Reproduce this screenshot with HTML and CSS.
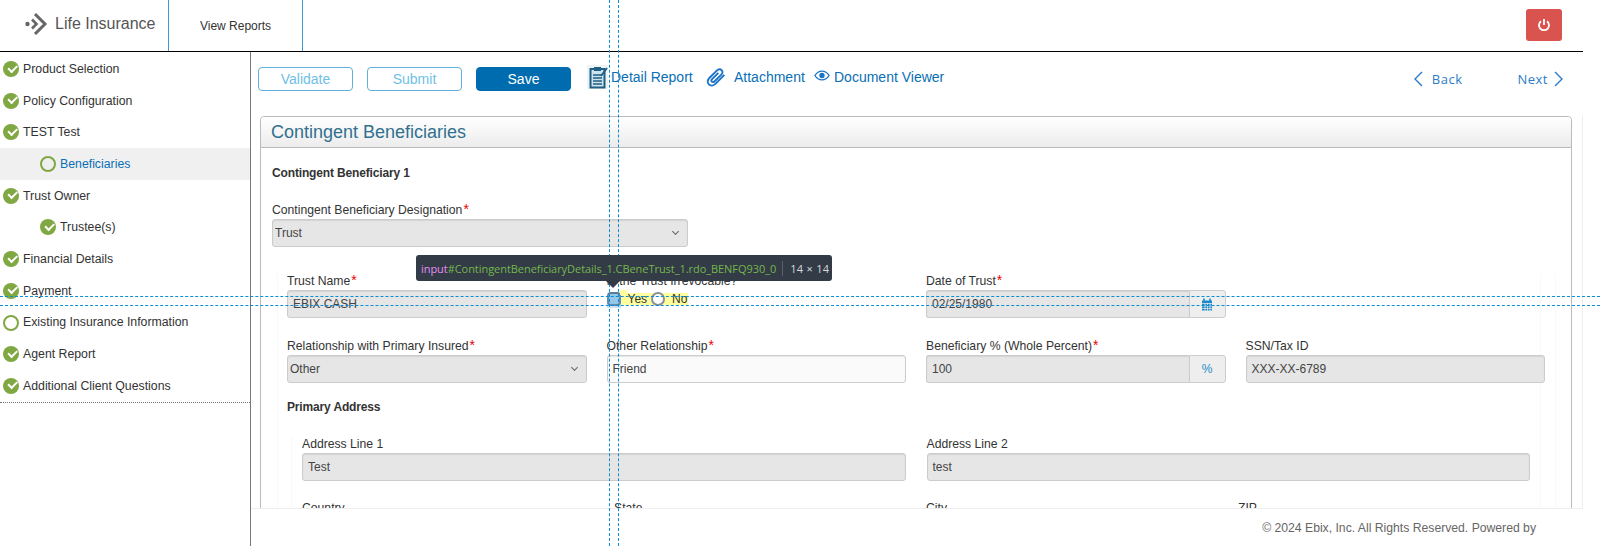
FILE: index.html
```html
<!DOCTYPE html>
<html lang="en">
<head>
<meta charset="UTF-8" />
<meta name="viewport" content="width=device-width, initial-scale=1" />
<title>Life Insurance</title>
<link rel="stylesheet" href="styles.css">
</head>
<body>
  <header class="topbar">
    <div class="brand">
      <svg class="brand-mark" viewBox="0 0 23 24" width="23" height="24"><circle cx="2.500" cy="12" r="2.200" fill="#666"/><path d="M7 7.500 11.500 12 7 16.500" fill="none" stroke="#666" stroke-width="2.600"/><path d="M10 2 20 12 10 22" fill="none" stroke="#666" stroke-width="3"/></svg>
      <span>Life Insurance</span>
    </div>
    <a class="top-tab">View Reports</a>
    <button class="power">
      <svg viewBox="0 0 14 14" width="14" height="14"><path d="M4 3.200a5 5 0 1 0 6 0" fill="none" stroke="#fff" stroke-width="1.800"/><path d="M7 1v6" stroke="#fff" stroke-width="1.800"/></svg>
    </button>
  </header>

  <div class="shell">
    <nav class="sidenav">
      <div class="step done">Product Selection</div>
      <div class="step done">Policy Configuration</div>
      <div class="step done">TEST Test</div>
      <div class="step open sub current">Beneficiaries</div>
      <div class="step done">Trust Owner</div>
      <div class="step done sub">Trustee(s)</div>
      <div class="step done">Financial Details</div>
      <div class="step done">Payment</div>
      <div class="step open">Existing Insurance Information</div>
      <div class="step done">Agent Report</div>
      <div class="step done">Additional Client Questions</div>
    </nav>

    <main class="main">
      <div class="toolbar">
        <button class="btn btn-ghost">Validate</button>
        <button class="btn btn-ghost">Submit</button>
        <button class="btn btn-save">Save</button>
        <a class="tool tool-report">
          <svg viewBox="0 0 21 24" width="21" height="24"><rect width="21" height="24" fill="#eef4f5"/><rect x="3.500" y="4" width="14" height="18.500" fill="#cfe3ee" stroke="#1f5f85" stroke-width="2"/><rect x="7" y="2" width="7" height="4" fill="#1f5f85"/><path d="M6 10h9M6 13h9M6 16h9M6 19h9" stroke="#1f5f85" stroke-width="1.300"/><path d="M14 11 20 3" stroke="#1f5f85" stroke-width="1.800"/></svg>
          Detail Report
        </a>
        <a class="tool tool-attach">
          <svg viewBox="0 0 20 20" width="21" height="21"><path d="M17.500 7.500 9 16c-2 2-4.800 2-6.300.500-1.500-1.500-1.500-4 .500-6L10.500 3.200c1.400-1.400 3.300-1.400 4.400-.300 1.100 1.100 1.100 3-.300 4.300L8 13.800c-.8.8-1.800.8-2.400.200-.6-.6-.6-1.600.200-2.400l6-6" fill="none" stroke="#1a73c8" stroke-width="1.800"/></svg>
          Attachment
        </a>
        <a class="tool tool-viewer">
          <svg viewBox="0 0 18 12" width="16" height="11"><path d="M1 6c2-3.200 4.800-5 8-5s6 1.800 8 5c-2 3.200-4.800 5-8 5S3 9.200 1 6z" fill="none" stroke="#1a73c8" stroke-width="1.500"/><circle cx="9" cy="6" r="3" fill="#1a73c8"/></svg>
          Document Viewer
        </a>
        <div class="pager">
          <a class="pager-link"><svg viewBox="0 0 10 16" width="10" height="16"><path d="M9 1 2 8l7 7" fill="none" stroke="#2a7cc7" stroke-width="1.400"/></svg>Back</a>
          <a class="pager-link pager-next">Next<svg viewBox="0 0 10 16" width="10" height="16"><path d="M1 1l7 7-7 7" fill="none" stroke="#2a7cc7" stroke-width="1.400"/></svg></a>
        </div>
      </div>

      <div class="scroll-area">
        <section class="panel">
          <h2 class="panel-title">Contingent Beneficiaries</h2>
          <div class="panel-body">
            <h3 class="sub-title">Contingent Beneficiary 1</h3>
            <div class="field field-designation">
              <label>Contingent Beneficiary Designation<i>*</i></label>
              <div class="input select">Trust</div>
            </div>

            <div class="trust-box">
              <div class="grid-4">
                <div class="field">
                  <label>Trust Name<i>*</i></label>
                  <div class="input">EBIX CASH</div>
                </div>
                <div class="field">
                  <label>Is the Trust Irrevocable?</label>
                  <div class="radios">
                    <span class="radio radio-picked"></span><span class="radio-text">Yes</span>
                    <span class="radio"></span><span class="radio-text">No</span>
                  </div>
                </div>
                <div class="field">
                  <label>Date of Trust<i>*</i></label>
                  <div class="input-group">
                    <div class="input">02/25/1980</div>
                    <span class="addon">
                      <svg viewBox="0 0 12 13" width="12" height="13"><path d="M1 2.500h10V12.500H1z" fill="#1e8ac9"/><path d="M3 .500v3M9 .500v3" stroke="#1e8ac9" stroke-width="1.600"/><path d="M1 5.500h10M1 8h10M1 10.500h10M4 5v8M6.500 5v8M9 5v8" stroke="#eee" stroke-width=".7"/></svg>
                    </span>
                  </div>
                </div>
                <div></div>

                <div class="field">
                  <label>Relationship with Primary Insured<i>*</i></label>
                  <div class="input select">Other</div>
                </div>
                <div class="field">
                  <label>Other Relationship<i>*</i></label>
                  <div class="input input-live">Friend</div>
                </div>
                <div class="field">
                  <label>Beneficiary % (Whole Percent)<i>*</i></label>
                  <div class="input-group">
                    <div class="input">100</div>
                    <span class="addon addon-text">%</span>
                  </div>
                </div>
                <div class="field">
                  <label>SSN/Tax ID</label>
                  <div class="input">XXX-XX-6789</div>
                </div>
              </div>

              <h3 class="sub-title address-title">Primary Address</h3>
              <div class="address-box">
                <div class="grid-2">
                  <div class="field">
                    <label>Address Line 1</label>
                    <div class="input">Test</div>
                  </div>
                  <div class="field">
                    <label>Address Line 2</label>
                    <div class="input">test</div>
                  </div>
                </div>
                <div class="grid-addr">
                  <label>Country</label>
                  <label>State</label>
                  <label>City</label>
                  <label>ZIP</label>
                </div>
              </div>
            </div>
          </div>
        </section>
      </div>

      <footer class="footer">© 2024 Ebix, Inc. All Rights Reserved. Powered by</footer>
    </main>
  </div>

  <!-- devtools inspect overlay -->
  <div class="inspect-hit"></div>
  <div class="guide guide-v guide-v1"></div>
  <div class="guide guide-v guide-v2"></div>
  <div class="guide guide-h guide-h1"></div>
  <div class="guide guide-h guide-h2"></div>
  <div class="inspect-tip">
    <span class="tip-tag">input</span><span class="tip-id">#ContingentBeneficiaryDetails_1.CBeneTrust_1.rdo_BENFQ930_0</span><span class="tip-size">14 × 14</span>
  </div>
</body>
</html>
```

FILE: styles.css
```css
html, body {
  margin: 0;
  height: 100%;
}
body {
  position: relative;
  height: 546px;
  overflow: hidden;
  background: #fff;
  color: #333;
  font-family: "Liberation Sans", Arial, sans-serif;
  font-size: 12px;
  display: flex;
  flex-direction: column;
}

/* top bar */
.topbar {
  height: 51px;
  width: 1583px;
  flex: none;
  display: flex;
  align-items: stretch;
  border-bottom: 1px solid #000;
}
.brand {
  width: 168px;
  box-sizing: border-box;
  padding: 0 0 4px 25px;
  display: flex;
  align-items: center;
  gap: 7px;
  font-size: 16px;
  color: #555;
}
.top-tab {
  width: 135px;
  display: flex;
  align-items: center;
  justify-content: center;
  border-left: 1px solid #3a9ad9;
  border-right: 1px solid #3a9ad9;
  font-size: 12px;
  box-sizing: border-box;
  color: #333;
}
.power {
  margin: 9px 21px 0 auto;
  width: 36px;
  height: 32px;
  border: none;
  border-radius: 3px;
  background: #d9534f;
  padding: 0;
  display: flex;
  align-items: center;
  justify-content: center;
}

.shell {
  flex: 1;
  display: flex;
  min-height: 0;
}

/* side steps */
.sidenav {
  width: 250px;
  height: 351px;
  flex: none;
  border-bottom: 1px dotted #777;
  padding-top: 1px;
  box-sizing: border-box;
  font-size: 12.300px;
}
.step {
  height: 31.7px;
  display: flex;
  align-items: center;
  padding-left: 23px;
  position: relative;
  color: #333;
}
.step::before {
  content: "";
  position: absolute;
  left: 3px;
  top: 8px;
  width: 16px;
  height: 16px;
  border-radius: 50%;
  box-sizing: border-box;
}
.step.done::before {
  background: #7fa843;
}
.step.done::after {
  content: "";
  position: absolute;
  left: 7.500px;
  top: 11.500px;
  width: 7px;
  height: 3.500px;
  border-left: 2px solid #fff;
  border-bottom: 2px solid #fff;
  transform: rotate(-45deg);
}
.step.open::before {
  background: #fff;
  border: 2px solid #7fa843;
}
.step.sub {
  padding-left: 60px;
}
.step.sub::before {
  left: 40px;
}
.step.sub.done::after {
  left: 44.500px;
}
.step.current {
  background: #f0f0f0;
  color: #0a6fb5;
}
.step.current::before {
  background: transparent;
}

/* main column */
.main {
  flex: 1;
  min-width: 0;
  display: flex;
  flex-direction: column;
  border-left: 1px solid #777;
}
.toolbar {
  height: 64px;
  flex: none;
  box-sizing: border-box;
  padding: 15px 36px 0 7px;
  display: flex;
  align-items: flex-start;
}
.btn {
  width: 95px;
  height: 24px;
  border-radius: 4px;
  font-family: inherit;
  font-size: 14px;
  padding: 0;
  margin-right: 14px;
}
.btn-ghost {
  background: #fff;
  border: 1px solid #5fb0dc;
  color: #6fc0e6;
}
.btn-save {
  background: #006cb0;
  border: 1px solid #006cb0;
  color: #fff;
  margin-right: 16px;
}
.tool {
  display: flex;
  align-items: center;
  font-size: 14px;
  color: #0a6fb5;
  height: 20px;
  white-space: nowrap;
}
.tool svg {
  flex: none;
}
.tool-report {
  width: 108px;
  gap: 3px;
  margin-right: 11px;
}
.tool-attach {
  gap: 7px;
  width: 96px;
  margin-right: 12px;
}
.tool-viewer {
  gap: 4px;
}
.tool-viewer svg {
  margin-bottom: 4px;
}
.pager {
  margin-left: auto;
  display: flex;
  gap: 55px;
  padding-top: 3px;
}
.pager-link {
  display: flex;
  align-items: center;
  gap: 9px;
  font-family: "Open Sans", sans-serif;
  font-size: 13px;
  letter-spacing: .5px;
  color: #2a7cc7;
}
.pager-next {
  gap: 6px;
}

/* scrolled form */
.scroll-area {
  flex: 1;
  min-height: 0;
  overflow: hidden;
  width: 1332px;
  box-sizing: border-box;
  padding-left: 9px;
  border-bottom: 1px solid #eee;
  border-right: 1px solid #eee;
}
.panel {
  width: 1312px;
  border: 1px solid #bbb;
  border-radius: 4px 4px 0 0;
  box-sizing: border-box;
  height: 500px;
}
.panel-title {
  margin: 0;
  height: 30px;
  padding: 0 0 0 10px;
  font-weight: normal;
  font-size: 18px;
  line-height: 30px;
  color: #31708f;
  border-bottom: 1px solid #bbb;
  background: linear-gradient(#fff, #ececec);
  border-radius: 4px 4px 0 0;
}
.panel-body {
  padding: 18px 0 0 11px;
}
.sub-title {
  margin: 0;
  font-size: 12px;
  line-height: 14px;
  font-weight: bold;
  letter-spacing: -.15px;
  color: #333;
}
.field label, .grid-addr label {
  display: block;
  font-size: 12.200px;
  line-height: 14px;
  margin-bottom: 2px;
  white-space: nowrap;
}
.field label i {
  color: #e00;
  font-style: normal;
  font-size: 14px;
  line-height: 10px;
  margin-left: 1px;
}
.field-designation {
  width: 416px;
  margin-top: 23px;
}
.input {
  height: 28px;
  box-sizing: border-box;
  border: 1px solid #ccc;
  border-radius: 3px;
  background: #e6e6e6;
  padding: 0 5px;
  line-height: 26px;
  color: #444;
  white-space: nowrap;
}
.field .input {
  box-shadow: inset 0 1px 1px rgba(0,0,0,.08);
}
.input-live {
  background: #fafafa;
}
.select {
  position: relative;
  padding-left: 2px;
}
.select::after {
  content: "";
  position: absolute;
  right: 9px;
  top: 9px;
  width: 4px;
  height: 4px;
  border-right: 1px solid #666;
  border-bottom: 1px solid #666;
  transform: rotate(45deg);
}
.trust-box {
  margin: 27px 0 0 5px;
  padding-left: 9px;
  width: 1264px;
  border-left: 1px solid #f9f9f9;
  border-right: 1px solid #f9f9f9;
  box-shadow: 14px 0 0 0 #fff, 15px 0 0 0 #f9f9f9;
  box-sizing: border-box;
}
.grid-4 {
  display: grid;
  grid-template-columns: repeat(4, 299.500px);
  column-gap: 20px;
  row-gap: 21px;
}
.radios {
  display: flex;
  align-items: center;
  height: 14px;
  margin-top: 4px;
  background: linear-gradient(#ffff9e, #ffff9e) 14px 1px / 67px 12px no-repeat;
}
.radio {
  width: 14px;
  height: 14px;
  box-sizing: border-box;
  border: 2px solid #8a8f98;
  border-radius: 50%;
  background: #fff;
  flex: none;
}
.radio-text {
  margin: 0 4px 0 7px;
}
.radio-picked {
  background: #a9d8f2;
  border-color: #5a7d96;
  border-radius: 4px;
}
.input-group {
  display: flex;
}
.input-group .input {
  flex: 1;
  border-radius: 3px 0 0 3px;
  border-right: none;
}
.addon {
  width: 37px;
  height: 28px;
  flex: none;
  box-sizing: border-box;
  border: 1px solid #ccc;
  border-radius: 0 3px 3px 0;
  background: #eee;
  display: flex;
  align-items: center;
  justify-content: center;
}
.addon-text {
  color: #1e8ac9;
}
.address-title {
  margin-top: 17px;
}
.address-box {
  margin: 23px 0 0 4px;
  padding-left: 10px;
  border-left: 1px solid #f9f9f9;
  width: 1243px;
  box-sizing: border-box;
}
.grid-2 {
  display: grid;
  grid-template-columns: repeat(2, 603.500px);
  column-gap: 21px;
}
.grid-addr {
  display: grid;
  grid-template-columns: repeat(4, 312px);
  margin-top: 20px;
}
.footer {
  height: 37px;
  flex: none;
  box-sizing: border-box;
  padding: 12px 64px 0 0;
  text-align: right;
  color: #666;
  font-size: 12.200px;
}

/* devtools overlay */
.guide {
  position: absolute;
  z-index: 10;
}
.guide-v {
  top: 0;
  bottom: 0;
  width: 0;
  border-left: 1px dashed #0a8fd6;
}
.guide-h {
  left: 0;
  right: 0;
  height: 0;
  border-top: 1px dashed #0a8fd6;
}
.guide-v1 { left: 609px; }
.guide-v2 { left: 618px; }
.guide-h1 { top: 296px; }
.guide-h2 { top: 305px; }
.inspect-tip {
  position: absolute;
  z-index: 12;
  left: 416px;
  top: 255px;
  width: 416px;
  height: 26px;
  box-sizing: border-box;
  padding: 0 5px;
  border-radius: 3px;
  background: #333b47;
  display: flex;
  align-items: center;
  font-family: "Open Sans", sans-serif;
  font-size: 11px;
  letter-spacing: -.05px;
  white-space: nowrap;
}
.inspect-tip::after {
  content: "";
  position: absolute;
  left: 190px;
  top: 26px;
  border: 7px solid transparent;
  border-top-color: #333b47;
  border-bottom: none;
}
.tip-tag {
  color: #e38ef0;
}
.tip-id {
  color: #74b84a;
}
.tip-size {
  margin-left: 6px;
  padding-left: 7px;
  border-left: 1px solid #5a616c;
  color: #d5d8dc;
  letter-spacing: .3px;
}
.inspect-hit {
  position: absolute;
  z-index: 5;
  left: 607px;
  top: 294px;
  width: 14px;
  height: 14px;
  background: rgba(111,168,220,.35);
}
.inspect-hit::after {
  content: "";
  position: absolute;
  left: 13px;
  top: -4px;
  width: 7px;
  height: 5px;
  background: #ffff9e;
}
```
